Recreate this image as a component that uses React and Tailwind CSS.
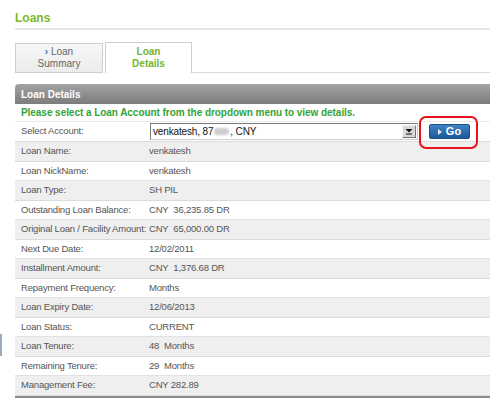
import React from "react";

const rows = [
  ["Loan Name:", "venkatesh"],
  ["Loan NickName:", "venkatesh"],
  ["Loan Type:", "SH PIL"],
  ["Outstanding Loan Balance:", "CNY\u00a0\u00a036,235.85 DR"],
  ["Original Loan / Facility Amount:", "CNY\u00a0\u00a065,000.00 DR"],
  ["Next Due Date:", "12/02/2011"],
  ["Installment Amount:", "CNY\u00a0\u00a01,376.68 DR"],
  ["Repayment Frequency:", "Months"],
  ["Loan Expiry Date:", "12/06/2013"],
  ["Loan Status:", "CURRENT"],
  ["Loan Tenure:", "48\u00a0\u00a0Months"],
  ["Remaining Tenure:", "29\u00a0\u00a0Months"],
  ["Management Fee:", "CNY 282.89"],
];

export default function App() {
  return (
    <div className="relative w-[490px] h-[419px] overflow-hidden bg-white font-['Liberation_Sans',Arial,sans-serif] text-[9.5px] tracking-[-0.2px] text-[#555]">
      {/* title */}
      <div className="pl-[15px] pt-[11px] h-[28px]">
        <div className="font-bold text-[12px] tracking-normal leading-[14px] text-[#7cba2c]">
          Loans
        </div>
      </div>
      <div className="ml-[15px] h-[2px] bg-[#e6e6e6]" />

      {/* tabs */}
      <div className="ml-[15px] mt-[12px] flex items-end h-[31px]">
        <div className="w-[88px] h-[30px] border border-[#cfcfcf] bg-gradient-to-b from-[#f7f7f7] to-[#ececec] flex flex-col items-center justify-center leading-[12px] text-[#666] text-[10px] tracking-normal">
          <div>
            <span className="text-[#3a78b8] font-bold">›</span> Loan
          </div>
          <div>Summary</div>
        </div>
        <div className="ml-[2px] w-[87px] h-[31px] border border-b-0 border-[#cfcfcf] bg-white flex flex-col items-center justify-center leading-[12px] font-bold text-[10px] tracking-normal text-[#76b52e]">
          <div>Loan</div>
          <div>Details</div>
        </div>
        <div className="flex-1 h-[1px] bg-[#d9d9d9]" />
      </div>

      {/* panel */}
      <div className="ml-[15px] mt-[11px]">
        <div className="h-[20px] rounded-tl-[4px] bg-gradient-to-b from-[#a3a3a3] to-[#7c7c7c] flex items-center pl-[6px] font-bold text-[10px] tracking-normal text-white">
          Loan Details
        </div>
        <div className="h-[18px] flex items-center pl-[6px] font-bold text-[10px] tracking-[-0.05px] text-[#33a436] bg-white border-b border-[#ececec]">
          Please select a Loan Account from the dropdown menu to view details.
        </div>
        {/* select row */}
        <div className="h-[20px] flex items-center border-b border-[#dcdcdc] bg-white">
          <div className="w-[134px] pl-[6px]">Select Account:</div>
          <div className="ml-[1px] w-[268px] h-[17px] border border-[#7a7a7a] border-r-[#cfcfcf] border-b-[#cfcfcf] bg-white flex items-center text-[#111] text-[10px] tracking-[-0.15px]">
            <div className="flex-1 pl-[2px] flex items-center leading-[14px]">
              venkatesh, 87
              <span className="inline-block w-[15px] h-[7px] mx-[1px] rounded-[3px] bg-[#cdcdcd] blur-[1px]" />
              , CNY
            </div>
            <div className="w-[14px] h-[13px] mr-[1px] bg-[#d8d8d8] border border-[#f4f4f4] border-r-[#777] border-b-[#777] flex items-center justify-center">
              <svg width="8" height="7" viewBox="0 0 8 7">
                <path d="M0.5 1 L7.5 1 L4 4.5 Z" fill="#111" />
                <rect x="1" y="5.5" width="6" height="1" fill="#111" />
              </svg>
            </div>
          </div>
          <div className="ml-[11px] w-[41px] h-[15px] rounded-[2px] border border-[#1d4f85] bg-gradient-to-b from-[#3f82c6] to-[#1b5a98] flex items-center justify-center gap-[4px] text-white font-bold text-[11px] tracking-normal leading-none">
            <svg width="4" height="6" viewBox="0 0 4 6">
              <path d="M0 0 L4 3 L0 6 Z" fill="#dfe9f5" />
            </svg>
            Go
          </div>
        </div>
        {rows.map(([label, value], i) => (
          <div
            key={label}
            className={
              i % 2 === 0
                ? "h-[19.5px] flex items-center bg-[#efefef] border-b border-[#dadada]"
                : "h-[19.5px] flex items-center bg-white border-b border-[#e2e2e2]"
            }
          >
            <div className="w-[134px] pl-[6px] whitespace-nowrap">{label}</div>
            <div className="whitespace-nowrap">{value}</div>
          </div>
        ))}
        <div className="h-[2px] bg-[#8a8a8a]" />
      </div>

      {/* red highlight */}
      <div className="absolute left-[419px] top-[116px] w-[59px] h-[33px] border-2 border-[#e8121a] rounded-[7px]" />
      {/* left edge fragment */}
      <div className="absolute left-0 top-[334px] w-[2px] h-[22px] bg-[#9aaabb]" />
    </div>
  );
}
